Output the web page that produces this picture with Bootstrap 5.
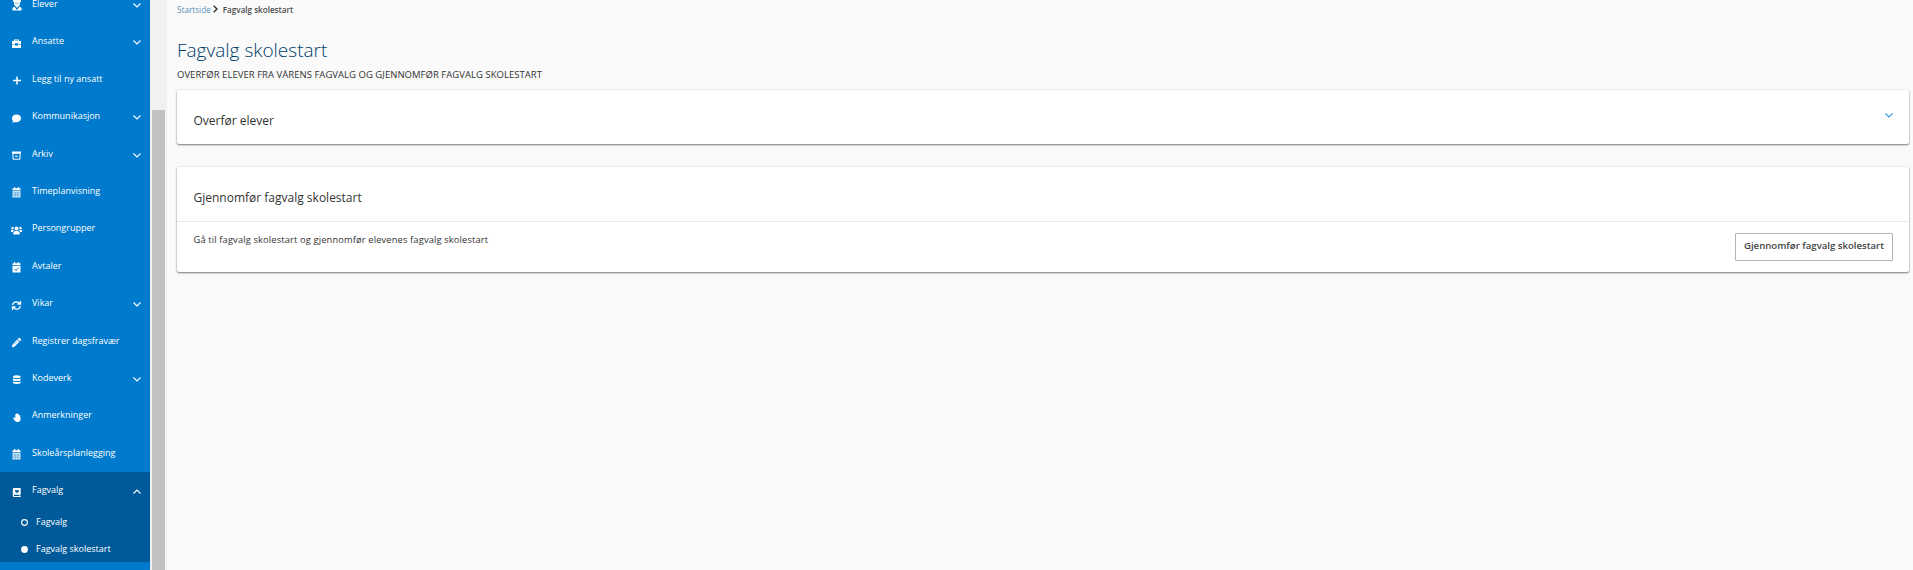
<!DOCTYPE html>
<html lang="no">
<head>
<meta charset="utf-8">
<meta name="viewport" content="width=device-width, initial-scale=1">
<title>Fagvalg skolestart</title>
<link href="https://cdn.jsdelivr.net/npm/bootstrap@5.3.0/dist/css/bootstrap.min.css" rel="stylesheet">
<style>
body{background:#fafafa;font-family:"Open Sans","Noto Sans",sans-serif;font-size:9.33px;color:#333;line-height:14px}
.side{width:150px;background:#007acc;color:#fff;flex:none}
.side-list{font-size:9px;line-height:10px}
.side-link{height:37.4px;padding:0 9px 0 9px;color:#fff;font-weight:500}
.side-link.first{height:23.2px;padding-bottom:14.2px;align-items:flex-start!important}
.side-link.first .label{line-height:9px;margin-top:-1px}
.side-link.first .ic{top:-.5px}
.side-link.first .chev{top:2.500px}
.side-link .ic{width:15px;height:11px;margin-right:8px;position:relative;top:1.500px;flex:none}
.side-link .label{white-space:nowrap;padding-bottom:1px}
.chev{width:8px;height:5px;margin-left:auto;fill:none;stroke:currentColor;stroke-width:1.1;flex:none}
.side-link .chev{position:relative;top:1px}
.open-group{background:#005a99;height:90px}
.sub-link{height:26.7px;padding-left:21px;color:#fff;font-weight:500}
.sub-link span{padding-bottom:1px}
.sub-link svg{width:7px;height:7px;margin-right:8px}
.track{width:17px;background:#f1f1f1;padding:110px 2px 0;flex:none}
.thumb{background:#c1c1c1}
.content{padding:3px 4px 0 10px}
.crumbs{font-size:8.2px;height:14px}
.crumbs a{color:#5b8fb5}
.crumbs .current{color:#4a4a4a;font-size:8.1px}
.crumbs svg{width:5px;height:8px;margin:-2px 5px 0 2px}
h1{font-size:19px;line-height:26px;font-weight:300;color:#003d69;margin:20px 0 0}
.lede{font-size:9.5px;line-height:14px;letter-spacing:.035px;margin:5px 0 8px}
.panel{background:#fff;border-radius:2px;box-shadow:0 1px 2px rgba(0,0,0,.5),0 0 2px rgba(0,0,0,.12)}
.panel + .panel{margin-top:23px}
.panel-head{height:54px;padding:7px 16px 0 16.500px}
.panel-head .chev{margin-top:-10px;color:#2f9bdc}
h2{font-size:12px;line-height:18px;margin:0;font-weight:400;color:#333}
.panel-body{border-top:1px solid #e9e9e9;height:51px;padding:11px 16px 11px 16.500px}
.desc{letter-spacing:.135px}
.btn-go{font-size:9.6px;font-weight:600;line-height:14px;color:#444;border:1px solid #adb5bd;border-radius:1px;background:#fff;padding:0 0 2px;width:158px;height:28px}
</style>
</head>
<body>
<svg class="d-none">
<symbol id="down" viewBox="0 0 8 5"><path d="M.5.5 4 4 7.5.5"/></symbol>
<symbol id="up" viewBox="0 0 8 5"><path d="M.5 4.5 4 1l3.5 3.5"/></symbol>
<symbol id="cal" viewBox="0 0 15 11"><path fill="#fff" d="M5 0h1.2v1.3h2.6V0H10v1.3h1.5v2h-8v-2H5z"/><path fill="#fff" fill-opacity=".85" d="M3.5 3.9h8v6.6h-8z"/><path stroke="#007acc" stroke-width=".6" stroke-opacity=".7" d="M4 6h7M4 8.2h7M6.1 4.5V10M8.8 4.5V10"/></symbol>
</svg>
<div class="d-flex vh-100 overflow-hidden">
<nav class="side overflow-hidden"><div class="side-list">
<a class="side-link first d-flex align-items-center text-decoration-none" href="#"><svg class="ic" viewBox="0 0 15 11"><path fill="#fff" d="M4 0h8v2h-1v2a3 3 0 0 1-1.600 2.200L8 8 6.600 6.200A3 3 0 0 1 5 4V2H4zM3.500 10.500V8l2-1.500L7.200 9v.5h1.600V9l1.700-2.500 2 1.500v2.500z"/><path fill="#007acc" d="M6.300 2.800h3.400v1H6.300z" opacity=".5"/></svg><span class="label">Elever</span><svg class="chev"><use href="#down"/></svg></a>
<a class="side-link d-flex align-items-center text-decoration-none" href="#"><svg class="ic" viewBox="0 0 15 11"><path fill="#fff" fill-rule="evenodd" d="M5 1.500h5v1.500h2v3H9V5.300H6V6H3V3h2zM6 2.400V3h3v-.6zM3 6.600h3v.9h3v-.9h3V10H3z"/></svg><span class="label">Ansatte</span><svg class="chev"><use href="#down"/></svg></a>
<a class="side-link d-flex align-items-center text-decoration-none" href="#"><svg class="ic" viewBox="0 0 15 11"><path stroke="#fff" stroke-width="1.500" d="M8 1.500v8M4 5.500h8"/></svg><span class="label">Legg til ny ansatt</span></a>
<a class="side-link d-flex align-items-center text-decoration-none" href="#"><svg class="ic" viewBox="0 0 15 11"><path fill="#fff" d="M7.500 1.500c2.600 0 4.500 1.600 4.500 3.800S10.100 9.200 7.500 9.200c-.7 0-1.300-.1-1.900-.3-.7.500-1.500.8-2.500.8.5-.5.800-1.100.9-1.700C3.300 7.300 3 6.400 3 5.300c0-2.200 1.900-3.800 4.500-3.800z"/></svg><span class="label">Kommunikasjon</span><svg class="chev"><use href="#down"/></svg></a>
<a class="side-link d-flex align-items-center text-decoration-none" href="#"><svg class="ic" viewBox="0 0 15 11"><path fill="#fff" d="M3 1.500h9v2.300H3z"/><path fill="none" stroke="#fff" d="M4 4v5.200h7V4M6 6.200h3"/></svg><span class="label">Arkiv</span><svg class="chev"><use href="#down"/></svg></a>
<a class="side-link d-flex align-items-center text-decoration-none" href="#"><svg class="ic"><use href="#cal"/></svg><span class="label">Timeplanvisning</span></a>
<a class="side-link d-flex align-items-center text-decoration-none" href="#"><svg class="ic" viewBox="0 0 15 11"><g fill="#fff"><circle cx="7.500" cy="3.500" r="2"/><circle cx="3.500" cy="3" r="1.200"/><circle cx="11.500" cy="3" r="1.200"/><path d="M4.300 9.500V8q0-2 2-2h2.400q2 0 2 2v1.500zM2 7V5.800q0-1 1-1h1.600q.4 0 .6.500Q3.900 6 3.800 7zM13 7V5.800q0-1-1-1h-1.600q-.4 0-.6.500 1.300.7 1.400 1.700z"/></g></svg><span class="label">Persongrupper</span></a>
<a class="side-link d-flex align-items-center text-decoration-none" href="#"><svg class="ic" viewBox="0 0 15 11"><path fill="#fff" d="M5 0h1.200v1.300h2.600V0H10v1.300h1.500v2h-8v-2H5zM3.500 3.900h8v6.600h-8z"/><path fill="none" stroke="#007acc" d="m5.500 7 1.500 1.500 2.700-2.800"/></svg><span class="label">Avtaler</span></a>
<a class="side-link d-flex align-items-center text-decoration-none" href="#"><svg class="ic" viewBox="0 0 15 11"><path fill="none" stroke="#fff" stroke-width="1.300" d="M3.700 5q.3-3 3.800-3.200 2 0 3.500 1.800M11.500 1v3H8.500M11.300 6q-.3 3-3.800 3.200-2 0-3.500-1.800M3.500 10V7h3"/></svg><span class="label">Vikar</span><svg class="chev"><use href="#down"/></svg></a>
<a class="side-link d-flex align-items-center text-decoration-none" href="#"><svg class="ic" viewBox="0 0 15 11"><path fill="#fff" d="M9.500 1.200q.8-.8 1.600 0l.7.7q.7.8 0 1.500l-.8.8-2.300-2.300zM8.100 2.500l2.300 2.300-5 5-2.400.6.400-2.700z"/><path stroke="#007acc" stroke-width=".5" d="M8.500 4 5 7.500"/></svg><span class="label">Registrer dagsfravær</span></a>
<a class="side-link d-flex align-items-center text-decoration-none" href="#"><svg class="ic" viewBox="0 0 15 11"><path fill="#fff" d="M4 2q3.500-1.500 7.500 0v1.600q-3.800 1.400-7.500 0zM4 4.600q3.700 1.300 7.500 0v1.800q-3.800 1.400-7.500 0zM4 7.400q3.700 1.300 7.500 0v1.800q-3.800 1.500-7.500 0z"/></svg><span class="label">Kodeverk</span><svg class="chev"><use href="#down"/></svg></a>
<a class="side-link d-flex align-items-center text-decoration-none" href="#"><svg class="ic" viewBox="0 0 15 11"><path fill="#fff" d="M6.300 2.200q.6-.6 1 0V1.500q.6-.7 1.200 0v.6q.7-.6 1.200.1v1q.7-.6 1.300.1l.7 4q-.4 2.700-2.500 2.700H7.700q-1.500-.4-3.600-3.600 0-1 1-.9l1.200.8z"/></svg><span class="label">Anmerkninger</span></a>
<a class="side-link d-flex align-items-center text-decoration-none" href="#"><svg class="ic"><use href="#cal"/></svg><span class="label">Skoleårsplanlegging</span></a>
<div class="open-group">
<a class="side-link d-flex align-items-center text-decoration-none" href="#"><svg class="ic" viewBox="0 0 15 11"><path fill="#fff" fill-rule="evenodd" d="M5 1h6.700v6.500h-.5v1.400h.5V10H5q-1.200 0-1.200-1.300V2.200Q3.800 1 5 1zm0 6.800v1.100h5.400V7.800zM8 6.200l2-1.900q.3-1.500-1-1.400-.8 0-1 .6-.2-.6-1-.6-1.300-.1-1 1.400z"/></svg><span class="label">Fagvalg</span><svg class="chev"><use href="#up"/></svg></a>
<a class="sub-link d-flex align-items-center text-decoration-none" href="#"><svg viewBox="0 0 7 7"><circle cx="3.500" cy="3.500" r="2.900" fill="none" stroke="#fff" stroke-width="1.100"/></svg><span>Fagvalg</span></a>
<a class="sub-link d-flex align-items-center text-decoration-none" href="#"><svg viewBox="0 0 7 7"><circle cx="3.500" cy="3.500" r="3.400" fill="#fff"/></svg><span>Fagvalg skolestart</span></a>
</div>
</div></nav>
<div class="track d-flex flex-column"><div class="thumb flex-grow-1"></div></div>
<main class="content flex-grow-1">
<div class="crumbs d-flex align-items-center"><a class="text-decoration-none" href="#">Startside</a><svg viewBox="0 0 5 8"><path d="M.7.7 4 4 .7 7.300" fill="none" stroke="#333" stroke-width="1.400"/></svg><span class="fw-semibold current">Fagvalg skolestart</span></div>
<h1><span>Fagvalg skolestart</span></h1>
<p class="lede"><span>OVERFØR ELEVER FRA VÅRENS FAGVALG OG GJENNOMFØR FAGVALG SKOLESTART</span></p>
<section class="panel"><div class="panel-head d-flex justify-content-between align-items-center"><h2>Overfør elever</h2><svg class="chev"><use href="#down"/></svg></div></section>
<section class="panel"><div class="panel-head d-flex align-items-center"><h2>Gjennomfør fagvalg skolestart</h2></div>
<div class="panel-body d-flex justify-content-between"><span class="desc">Gå til fagvalg skolestart og gjennomfør elevenes fagvalg skolestart</span><button class="btn btn-go">Gjennomfør fagvalg skolestart</button></div></section>
</main>
</div>
<script src="https://cdn.jsdelivr.net/npm/bootstrap@5.3.0/dist/js/bootstrap.bundle.min.js"></script>
</body>
</html>
